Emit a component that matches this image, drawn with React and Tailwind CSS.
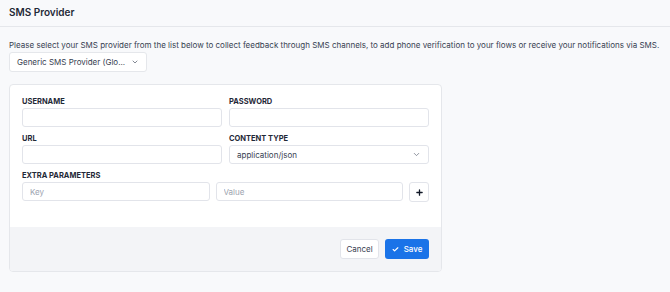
import { ChevronDown, Plus, Check } from "lucide-react";

function Field({ label, children }) {
  return (
    <div className="flex flex-col">
      <label className="text-[7.5px] font-bold text-[#1f2937] leading-[9px] mb-[2px]">
        {label}
      </label>
      {children}
    </div>
  );
}

function TextInput({ placeholder = "" }) {
  return (
    <input
      placeholder={placeholder}
      className="block h-[19px] w-full rounded-[3px] border border-[#e2e4ea] bg-white px-[7px] text-[8px] text-[#374151] placeholder:text-[#9ca3af] outline-none"
    />
  );
}

export default function App() {
  return (
    <div
      className="min-h-[292px] w-[670px] bg-[#f8f9fb] text-[#1f2937]"
      style={{ fontFamily: "Inter, 'Noto Sans', sans-serif" }}
    >
      {/* Header */}
      <div className="h-[27px] border-b border-[#e5e7eb] px-[9px] flex items-center">
        <h1 className="text-[10px] font-semibold text-[#1f2937] pb-[2px]">SMS Provider</h1>
      </div>

      <div className="px-[9px] pt-[12px]">
        <p className="text-[8px] text-[#374151] leading-[12px] whitespace-nowrap">
          Please select your SMS provider from the list below to collect feedback through SMS
          channels, to add phone verification to your flows or receive your notifications via SMS.
        </p>

        <button className="mt-[1px] h-[20px] w-[138px] rounded-[3px] border border-[#e5e7eb] bg-white pl-[7px] pr-[7px] flex items-center justify-between text-[8px] text-[#374151] whitespace-nowrap">
          <span>Generic SMS Provider (Glo...</span>
          <ChevronDown className="h-[8px] w-[8px] text-[#6b7280]" strokeWidth={2.5} />
        </button>

        {/* Card */}
        <div className="mt-[12px] w-[433px] rounded-[4px] border border-[#e5e7eb] bg-white overflow-hidden">
          <div className="px-[12px] pt-[12px] pb-[25px] flex flex-col gap-[7px]">
            <div className="grid grid-cols-2 gap-[7px]">
              <Field label="USERNAME">
                <TextInput />
              </Field>
              <Field label="PASSWORD">
                <TextInput />
              </Field>
            </div>
            <div className="grid grid-cols-2 gap-[7px]">
              <Field label="URL">
                <TextInput />
              </Field>
              <Field label="CONTENT TYPE">
                <div className="h-[19px] w-full rounded-[3px] border border-[#e2e4ea] bg-white px-[7px] flex items-center justify-between text-[8px] text-[#374151]">
                  <span>application/json</span>
                  <ChevronDown className="h-[9px] w-[9px] text-[#6b7280]" strokeWidth={2} />
                </div>
              </Field>
            </div>
            <Field label="EXTRA PARAMETERS">
              <div className="flex items-start gap-[6px]">
                <div className="flex-1">
                  <TextInput placeholder="Key" />
                </div>
                <div className="flex-1">
                  <TextInput placeholder="Value" />
                </div>
                <button className="h-[20px] w-[20px] shrink-0 rounded-[3px] border border-[#e2e4ea] bg-white flex items-center justify-center">
                  <Plus className="h-[9px] w-[9px] text-[#111827]" strokeWidth={3.5} />
                </button>
              </div>
            </Field>
          </div>

          {/* Footer */}
          <div className="h-[44px] bg-[#f3f4f7] px-[12px] flex items-center justify-end gap-[6px]">
            <button className="h-[20px] w-[39px] rounded-[3px] border border-[#e2e4ea] bg-white text-[8px] text-[#374151]">
              Cancel
            </button>
            <button className="h-[20px] w-[44px] justify-center rounded-[3px] bg-[#1a73e8] text-[8px] font-medium text-white flex items-center gap-[5px]">
              <Check className="h-[7px] w-[7px]" strokeWidth={4} />
              Save
            </button>
          </div>
        </div>
      </div>
    </div>
  );
}
